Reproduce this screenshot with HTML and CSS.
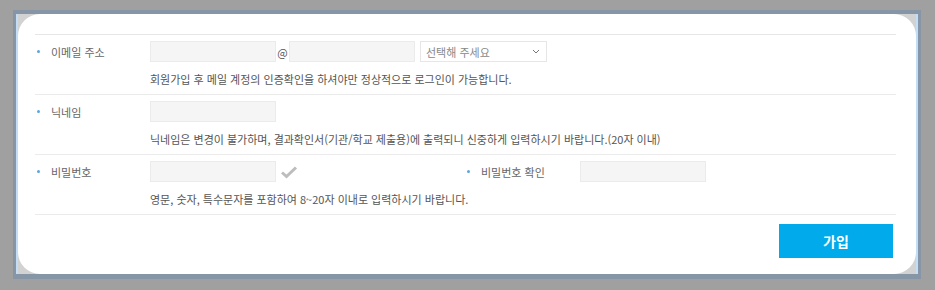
FILE: index.html
```html
<!DOCTYPE html>
<html lang="ko">
<head>
    <meta charset="UTF-8">
    <meta name="viewport" content="width=device-width, initial-scale=1.0">
    <title>회원가입</title>
    <link rel="stylesheet" href="styles.css">
</head>
<body>
    <div class="frame">
        <div class="shell">
            <div class="panel">
                <form class="join-form">
                    <!-- 이메일 -->
                    <div class="form-row">
                        <div class="field-line">
                            <label class="form-label" for="emailId">이메일 주소</label>
                            <input type="text" class="form-control" id="emailId">
                            <span class="at">@</span>
                            <input type="text" class="form-control" id="emailDomain">
                            <div class="form-select">
                                <span>선택해 주세요</span>
                                <svg class="chevron" width="8" height="5" viewBox="0 0 8 5"><polyline points="1,1 4,4 7,1" fill="none" stroke="#777" stroke-width="1"/></svg>
                            </div>
                        </div>
                        <p class="help-text">회원가입 후 메일 계정의 인증확인을 하셔야만 정상적으로 로그인이 가능합니다.</p>
                    </div>

                    <!-- 닉네임 -->
                    <div class="form-row">
                        <div class="field-line">
                            <label class="form-label" for="nickname">닉네임</label>
                            <input type="text" class="form-control" id="nickname">
                        </div>
                        <p class="help-text">닉네임은 변경이 불가하며, 결과확인서(기관/학교 제출용)에 출력되니 신중하게 입력하시기 바랍니다.(20자 이내)</p>
                    </div>

                    <!-- 비밀번호 -->
                    <div class="form-row">
                        <div class="field-line">
                            <div class="pair">
                                <label class="form-label" for="password">비밀번호</label>
                                <input type="password" class="form-control" id="password">
                                <svg class="check" width="18" height="14" viewBox="0 0 18 14"><polyline points="2,7.5 6.5,11.5 16,2.5" fill="none" stroke="#bdbdbd" stroke-width="3"/></svg>
                            </div>
                            <label class="form-label" for="passwordConfirm">비밀번호 확인</label>
                            <input type="password" class="form-control" id="passwordConfirm">
                        </div>
                        <p class="help-text">영문, 숫자, 특수문자를 포함하여 8~20자 이내로 입력하시기 바랍니다.</p>
                    </div>

                    <div class="form-footer">
                        <button type="button" class="btn-join">가입</button>
                    </div>
                </form>
            </div>
        </div>
    </div>
</body>
</html>
```

FILE: styles.css
```css
body {
    margin: 0;
    padding: 10px 0 0 13px;
    background-color: #a0a0a0;
    font-family: "Noto Sans CJK KR", "Noto Sans", sans-serif;
}

.frame {
    width: 902px;
    height: 260px;
    border-style: solid;
    border-color: #8796a7;
    border-width: 4px 3px 5px 3px;
}

.shell {
    height: 100%;
    background-color: #d2d2d2;
    border-left: 2px solid #c3ddf4;
    border-right: 2px solid #c3ddf4;
}

.panel {
    height: 100%;
    box-sizing: border-box;
    background-color: #fff;
    border-radius: 22px;
    padding: 20px 20px 0 17px;
}

.form-row {
    padding: 6px 0 7px;
    border-bottom: 1px solid #ebebeb;
}

.form-row:first-child {
    border-top: 1px solid #e6e6e6;
}

.field-line {
    display: flex;
    align-items: center;
    height: 21px;
}

.pair {
    display: flex;
    align-items: center;
    width: 430px;
}

.form-label {
    display: flex;
    align-items: center;
    width: 115px;
    flex-shrink: 0;
    font-size: 11px;
    color: #666;
}

.form-label::before {
    content: "";
    width: 3px;
    height: 3px;
    border-radius: 50%;
    background-color: #5ea6da;
    margin: 0 11px 0 2px;
}

.form-control {
    width: 126px;
    height: 21px;
    box-sizing: border-box;
    margin: 0;
    padding: 0 5px;
    background-color: #f5f5f5;
    border: 1px solid #ebebeb;
    font-size: 11px;
}

.at {
    width: 13px;
    text-align: center;
    font-size: 11px;
    color: #555;
}

.form-select {
    display: flex;
    align-items: center;
    justify-content: space-between;
    width: 127px;
    height: 21px;
    box-sizing: border-box;
    margin-left: 5px;
    padding: 0 6px 0 5px;
    border: 1px solid #e6e6e6;
    font-size: 11px;
    color: #888;
}

.check {
    margin-left: 4px;
}

.help-text {
    margin: 9px 0 0 115px;
    line-height: 16px;
    font-size: 11px;
    color: #555;
}

.form-footer {
    display: flex;
    justify-content: flex-end;
    padding: 9px 3px 0 0;
}

.btn-join {
    width: 114px;
    height: 34px;
    background-color: #00aaeb;
    color: #fff;
    border: none;
    font-family: inherit;
    font-size: 14px;
    font-weight: bold;
    cursor: pointer;
}
```
